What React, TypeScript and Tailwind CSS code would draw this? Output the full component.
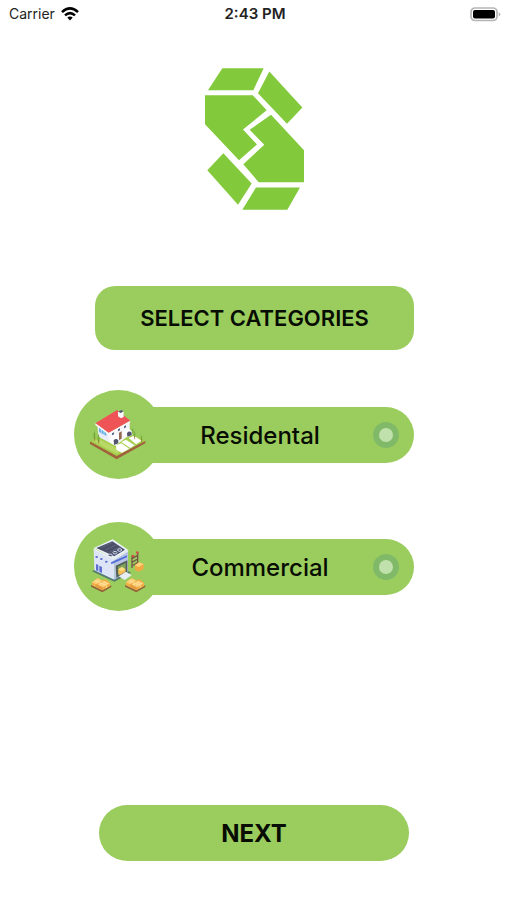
import { useState, type ReactNode } from "react";

function StatusBar() {
  return (
    <header className="grid h-7 grid-cols-3 items-center pl-[9px] pr-[6px] text-[14px] leading-5 text-[#222]">
      <div className="flex items-center gap-[6px]">
        <span>Carrier</span>
        <svg className="h-[14px] w-[18px]" viewBox="0 0 18 14" aria-label="Wi-Fi" fill="none" stroke="#000" strokeWidth="2.5">
          <path d="M1 5.2 Q9 -2.4 17 5.2" />
          <path d="M4 8.4 Q9 3.8 14 8.4" />
          <path d="M6.3 10.6 Q9 8.2 11.7 10.6 L9 13.6 Z" fill="#000" stroke="none" />
        </svg>
      </div>
      <span className="text-center text-[15px] font-semibold">2:43 PM</span>
      <svg className="h-[15px] w-[31px] justify-self-end" viewBox="0 0 31 15" aria-label="Battery full">
        <rect x="1" y="1" width="26" height="12.5" rx="4" fill="#fff" stroke="#b5b5b5" strokeWidth="1.7" />
        <rect x="3" y="3" width="22" height="8.5" rx="2" fill="#000" />
        <path d="M28.7 5 Q32 7.3 28.7 9.6Z" fill="#b5b5b5" />
      </svg>
    </header>
  );
}

function Logo() {
  return (
    <svg className="h-[142px] w-[99px]" viewBox="30 27 297 425" role="img" aria-label="S logo" fill="#82c93b">
      <path d="M82 27H206L175 93H39Z" />
      <path d="M223 37L322 145L276 194L189 102Z" />
      <path d="M30 108H173L215 153L144 211L186 256L132 303L30 195Z" />
      <path d="M228 167L327 273V369H191L145 315L208 257L164 212Z" />
      <path d="M85 282L170 373L129 437L37 333Z" />
      <path d="M183 385H315L277 452H142Z" />
    </svg>
  );
}

function HouseIcon() {
  return (
    <svg className="size-[70px]" viewBox="0 0 210 210" aria-hidden="true">
      <path d="M18 124L98 166L184 122V130L98 178L18 132Z" fill="#a0633c" />
      <path d="M18 124L103 80L184 122L98 168Z" fill="#a5cf4b" />
      <path d="M28 124L98 161L112 153L44 116Z" fill="#bad866" />
      <path d="M96 136L112 130L136 146L114 158L97 149Z" fill="#fff" />
      <path d="M112 126L126 119L152 136L139 144Z" fill="#fff" />
      <path d="M134 114L150 107L173 122L156 133Z" fill="#fff" />
      <path d="M40 72L71 98L94 116V137L43 110Z" fill="#e9ecf5" />
      <path d="M72 99L137 65V104L94 137L73 125Z" fill="#f5f4f7" />
      <path d="M45 82L67 95V108L45 96Z" fill="#68b2e3" />
      <path d="M52 86V100M60 91V104" stroke="#d9edf9" strokeWidth="2" />
      <path d="M34 70L99 30L139 62L74 99Z" fill="#ef5557" />
      <path d="M34 70L74 99L139 62V66L74 104L34 75Z" fill="#fffafa" />
      <path d="M62 60L98 38M54 72L108 42M64 82L122 50M73 90L132 59" stroke="#e54c53" strokeWidth="1" />
      <path d="M102 36L112 31L119 36V51L111 55L102 49Z" fill="#f7f6fa" />
      <path d="M103 35L112 30L118 34L110 39Z" fill="#4d5268" />
      <path d="M80 108L94 101L105 109V128L92 136L80 128Z" fill="#fff" />
      <path d="M116 93L133 85L145 95V105L129 112L116 105Z" fill="#fff" />
      <path d="M89 121Q96 113 103 121V130L90 135Z" fill="#535470" />
      <path d="M129 99Q136 91 143 98V106L130 110Z" fill="#535470" />
      <path d="M105 98L113 94V116L105 120Z" fill="#92694e" />
      <path d="M84 100L90 97V103L84 106ZM102 88L108 85V91L102 94ZM120 79L126 76V82L120 85Z" fill="#4f6183" />
      <g fill="#75ad3f">
        <path d="M31 92Q37 105 32 119Q25 111 31 92Z" />
        <path d="M43 101Q50 117 44 128Q37 118 43 101Z" />
        <path d="M151 93Q157 104 152 114Q146 106 151 93Z" />
        <path d="M173 105Q178 116 173 125Q167 116 173 105Z" />
        <path d="M146 82Q151 92 146 104Q141 92 146 82Z" />
      </g>
      <path d="M32 112V122M44 121V131M152 108V118M173 118V127" stroke="#9a7038" strokeWidth="2" />
    </svg>
  );
}

function Boxes({ x, y }: { x: number; y: number }) {
  return (
    <g transform={`translate(${x} ${y})`}>
      <path d="M0 17L34 33L61 18V23L34 39L0 22Z" fill="#956039" />
      <path d="M3 9L20 -3L34 3L44 0L57 10V20L34 33L3 17Z" fill="#f3ad45" />
      <path d="M3 9L20 -3L34 4L16 15ZM20 16L38 5L56 12L36 24Z" fill="#ffd07a" />
      <path d="M16 15V24L35 32V24Z" fill="#e59a3f" />
      <path d="M12 3L26 10V18M27 11L46 18V26M37 6L50 13" fill="none" stroke="#ffebb0" strokeWidth="2" />
    </g>
  );
}

function WarehouseIcon() {
  return (
    <svg className="size-[70px]" viewBox="0 0 210 210" aria-hidden="true">
      <path d="M24 118L35 111L91 139L134 118L141 122L91 149Z" fill="#547b70" />
      <path d="M29 51L91 82V143L31 115Z" fill="#dce4f6" />
      <path d="M91 82L132 56V118L91 143Z" fill="#b9c5e5" />
      <path d="M29 48L86 22L133 54L91 80Z" fill="#edf2ff" />
      <path d="M37 48L85 28L123 53L91 73Z" fill="#4b5068" />
      <path d="M53 46L86 31M65 53L98 38M77 60L110 45" stroke="#687088" strokeWidth="2" />
      <g fill="#596077" stroke="#c9d5e9" strokeWidth="3">
        <ellipse cx="79" cy="70" rx="6" ry="4" />
        <ellipse cx="93" cy="62" rx="6" ry="4" />
        <ellipse cx="107" cy="54" rx="6" ry="4" />
      </g>
      <path d="M29 51L91 82L133 56" fill="none" stroke="#f7f9ff" strokeWidth="3" />
      <path d="M81 91L129 70V76L82 97Z" fill="#536fda" />
      <g fill="#596ed0">
        <ellipse cx="38" cy="75" rx="4" ry="3" />
        <ellipse cx="52" cy="81" rx="4" ry="3" />
        <ellipse cx="67" cy="89" rx="4" ry="3" />
        <path d="M36 96L43 99V118L36 115ZM46 101L54 105V123L46 119Z" />
      </g>
      <path d="M95 101L130 85V120L97 137Z" fill="#566056" />
      <path d="M102 104L125 93V118L102 130Z" fill="#7ea65a" />
      <path d="M103 112L114 105L124 112V120L107 129L103 123Z" fill="#f8bd52" />
      <path d="M103 112L114 105L124 112L113 118Z" fill="#ffdc82" />
      <path d="M104 133L126 119L143 130L122 144Z" fill="#e6edf3" />
      <path d="M144 71V108M161 61V99M144 80L161 70M144 91L161 81M144 102L161 92" fill="none" stroke="#755746" strokeWidth="4" />
      <circle cx="147" cy="72" r="4" fill="#d64f46" />
      <circle cx="160" cy="62" r="4" fill="#d64f46" />
      <path d="M153 99L166 91L179 97V111L163 119L153 113Z" fill="#f3a943" />
      <path d="M153 99L166 91L179 97L163 105Z" fill="#ffd27b" />
      <Boxes x={21} y={142} />
      <Boxes x={123} y={142} />
    </svg>
  );
}

function CategoryOption({ name, icon, selected, onSelect }: {
  name: string;
  icon: ReactNode;
  selected: boolean;
  onSelect: () => void;
}) {
  return (
    <label className="flex cursor-pointer items-center">
      <span className="z-10 flex size-[89px] shrink-0 items-center justify-center rounded-full bg-[#9bcd5e]">{icon}</span>
      <span className="-ml-6 flex h-14 flex-1 items-center rounded-r-full bg-[#9bcd5e] pl-2 pr-[15px]">
        <span className="flex-1 pt-0.5 text-center text-[24px] font-medium leading-8">{name}</span>
        <input
          type="radio"
          name="category"
          checked={selected}
          onChange={onSelect}
          className="size-[26px] cursor-pointer appearance-none rounded-full border-[6px] border-[#80ba68] bg-[#c0e1ac] checked:bg-[#35733b]"
        />
      </span>
    </label>
  );
}

export default function App() {
  const [category, setCategory] = useState("");

  return (
    <div className="flex min-h-screen flex-col bg-white font-['Inter','Liberation_Sans',sans-serif] text-[#080d03]">
      <StatusBar />
      <main className="flex flex-1 flex-col pb-[39px] pl-[74px] pr-[93px] pt-10">
        <div className="ml-5 flex justify-center">
          <Logo />
        </div>
        <h1 className="ml-[21px] mt-[76px] flex h-16 items-center justify-center rounded-[20px] bg-[#9bcd5e] text-[22px] font-semibold leading-8">
          SELECT CATEGORIES
        </h1>
        <div className="mt-10 flex flex-col gap-[43px]" role="radiogroup" aria-label="Categories">
          <CategoryOption name="Residental" icon={<HouseIcon />} selected={category === "residential"} onSelect={() => setCategory("residential")} />
          <CategoryOption name="Commercial" icon={<WarehouseIcon />} selected={category === "commercial"} onSelect={() => setCategory("commercial")} />
        </div>
        <button type="button" className="ml-[25px] mr-[5px] mt-auto h-14 cursor-pointer rounded-full bg-[#9bcd5e] pt-0.5 text-[24px] font-bold leading-8">
          NEXT
        </button>
      </main>
    </div>
  );
}
